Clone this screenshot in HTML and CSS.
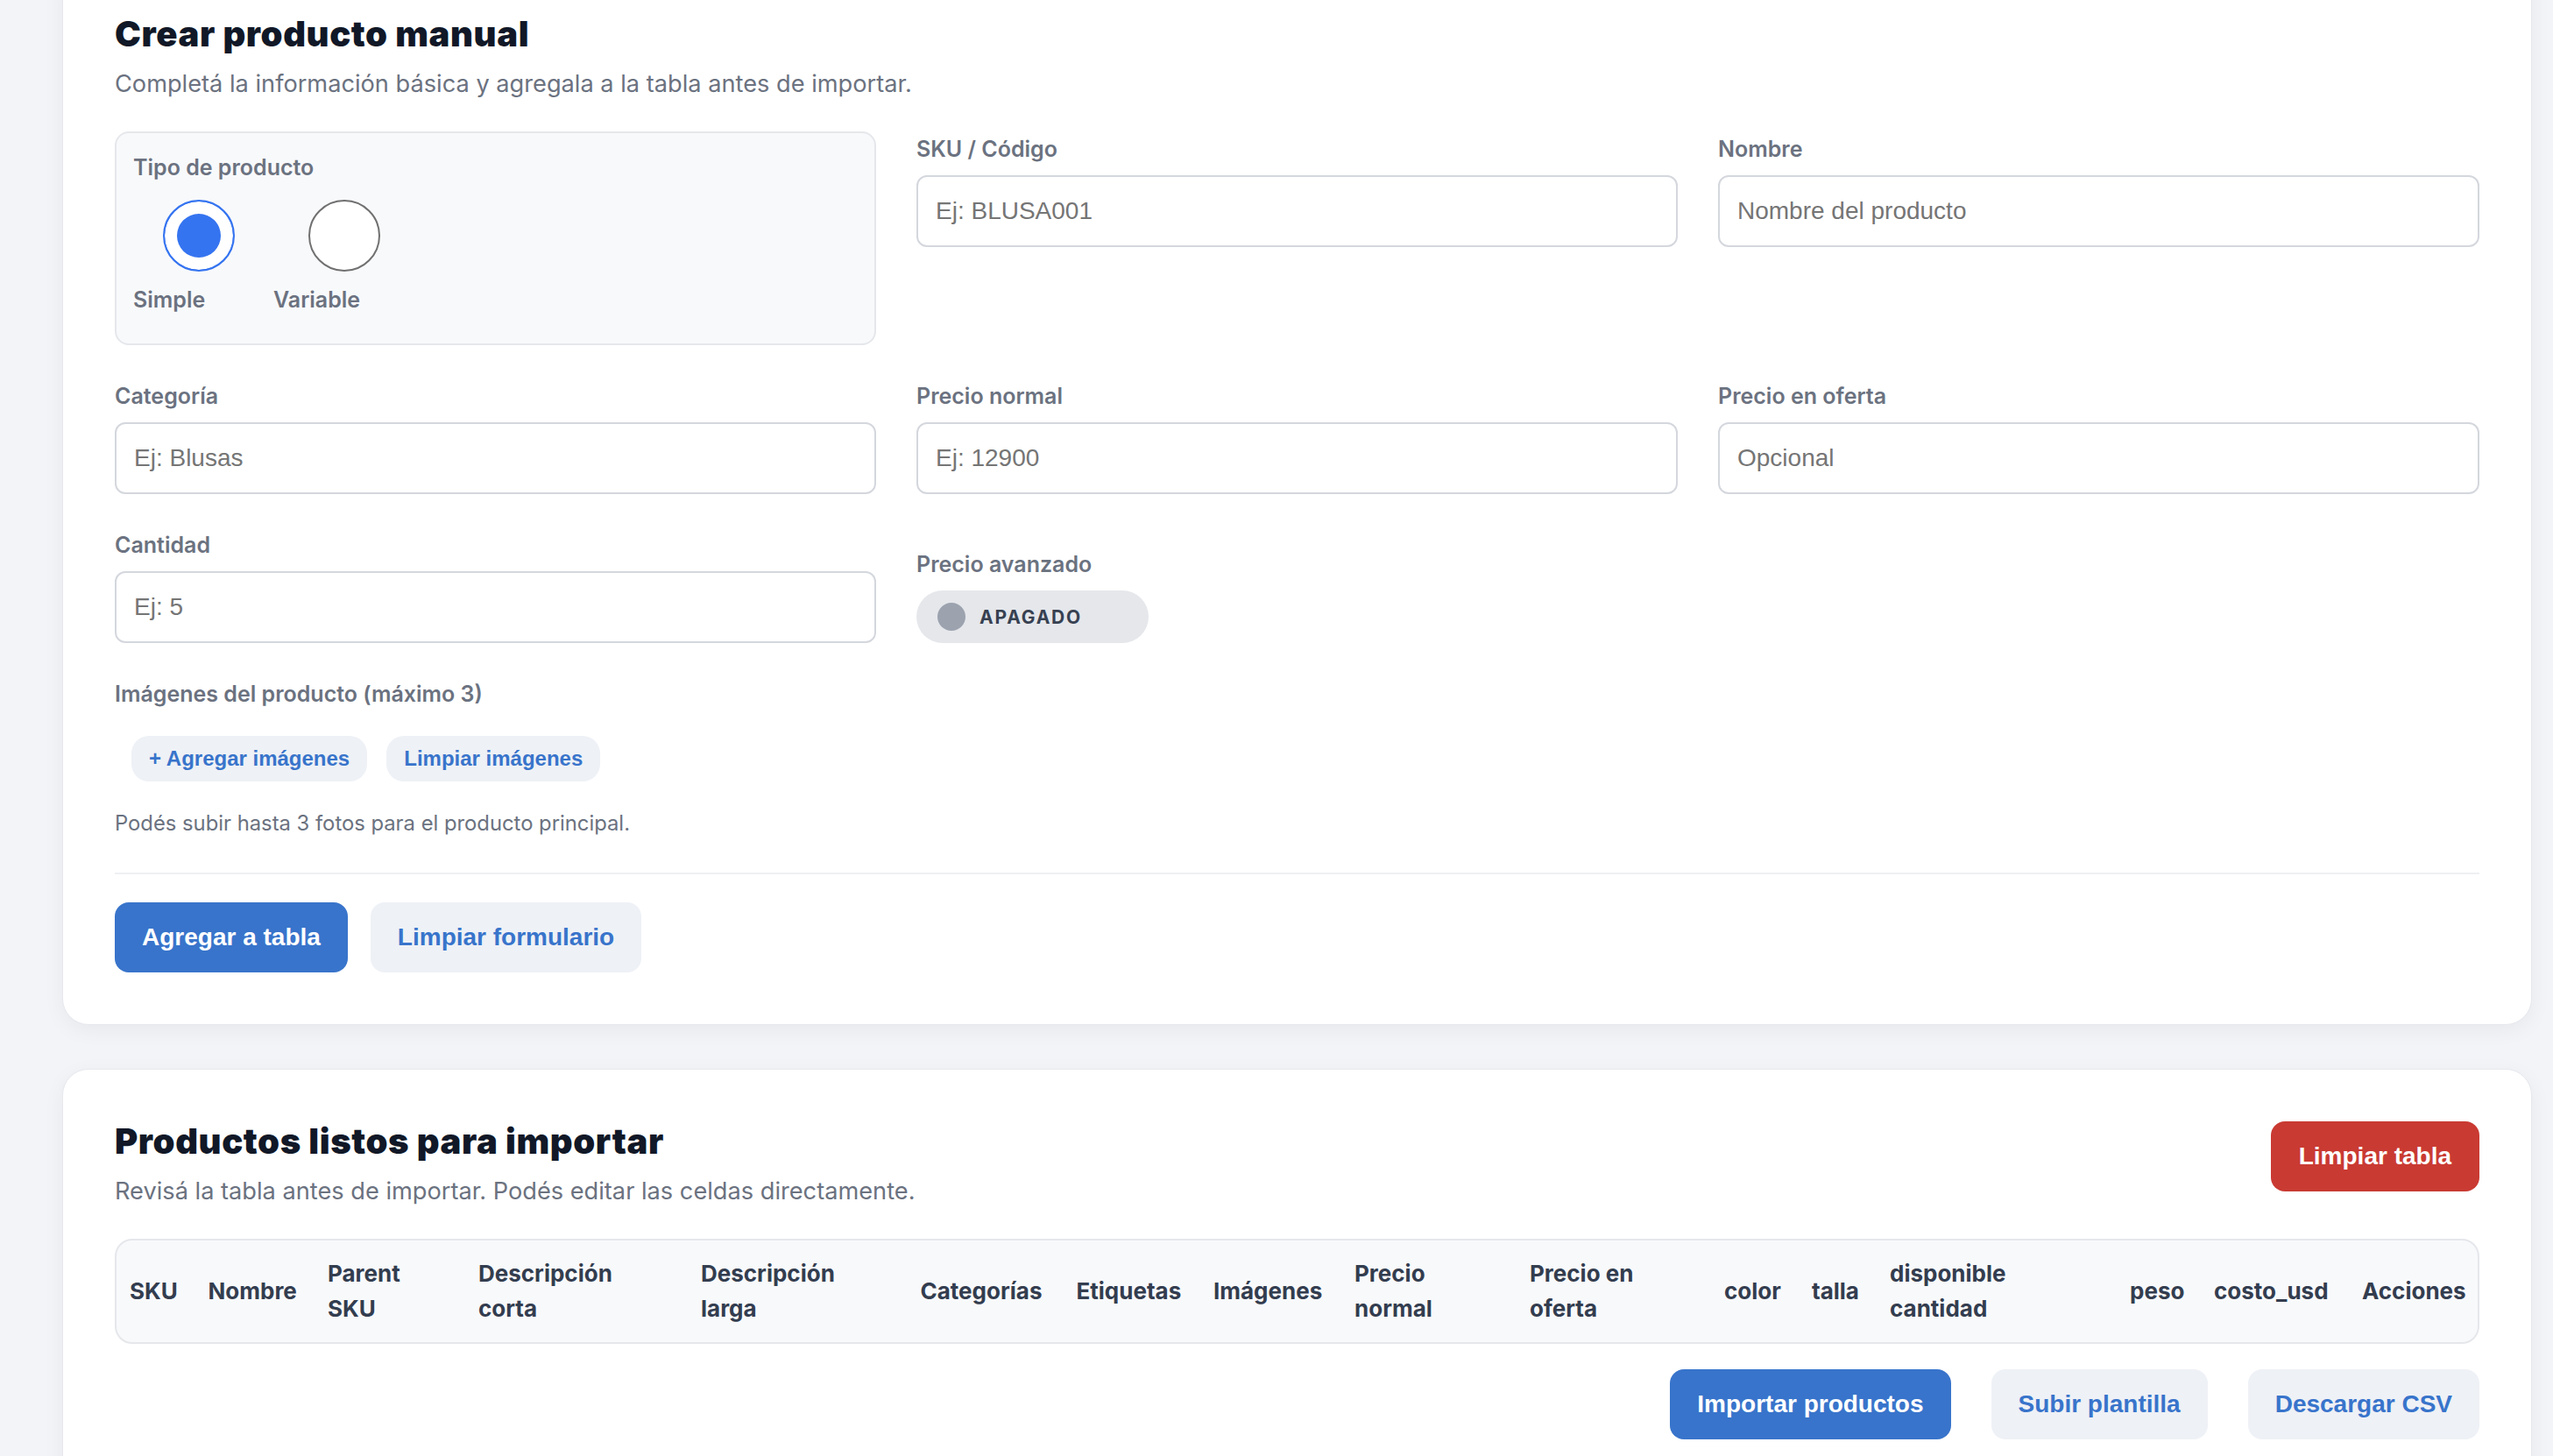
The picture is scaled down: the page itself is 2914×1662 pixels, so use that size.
FILE: index.html
```html
<!DOCTYPE html>
<html lang="es">
<head>
  <meta charset="UTF-8" />
  <meta name="viewport" content="width=device-width, initial-scale=1.0"/>
  <title>Importar productos</title>
  <link rel="stylesheet" href="styles.css">
</head>
<body>
  <main class="page">

    <!-- Crear producto manual -->
    <section class="card">
      <h2 class="card-title">Crear producto manual</h2>
      <p class="card-subtitle">Completá la información básica y agregala a la tabla antes de importar.</p>

      <form class="form-grid" id="manual-form">
        <div class="type-box">
          <span class="field-label">Tipo de producto</span>
          <div class="type-options">
            <label class="type-option type-option--simple">
              <input type="radio" name="tipo" value="simple" checked>
              <span>Simple</span>
            </label>
            <label class="type-option type-option--variable">
              <input type="radio" name="tipo" value="variable">
              <span>Variable</span>
            </label>
          </div>
        </div>

        <div class="field field--top">
          <label class="field-label" for="sku">SKU / Código</label>
          <input class="text-input" id="sku" type="text" placeholder="Ej: BLUSA001">
        </div>

        <div class="field field--top">
          <label class="field-label" for="nombre">Nombre</label>
          <input class="text-input" id="nombre" type="text" placeholder="Nombre del producto">
        </div>

        <div class="field">
          <label class="field-label" for="categoria">Categoría</label>
          <input class="text-input" id="categoria" type="text" placeholder="Ej: Blusas">
        </div>

        <div class="field">
          <label class="field-label" for="precio">Precio normal</label>
          <input class="text-input" id="precio" type="text" placeholder="Ej: 12900">
        </div>

        <div class="field">
          <label class="field-label" for="oferta">Precio en oferta</label>
          <input class="text-input" id="oferta" type="text" placeholder="Opcional">
        </div>

        <div class="field">
          <label class="field-label" for="cantidad">Cantidad</label>
          <input class="text-input" id="cantidad" type="text" placeholder="Ej: 5">
        </div>

        <div class="field field--toggle">
          <span class="field-label">Precio avanzado</span>
          <button type="button" class="toggle">
            <span class="toggle-dot"></span>
            <span class="toggle-text">APAGADO</span>
          </button>
        </div>

        <div class="field field--wide">
          <span class="field-label">Imágenes del producto (máximo 3)</span>
          <div class="image-drop">
            <button type="button" class="btn-chip">+ Agregar imágenes</button>
            <button type="button" class="btn-chip">Limpiar imágenes</button>
          </div>
          <p class="help-text">Podés subir hasta 3 fotos para el producto principal.</p>
        </div>
      </form>

      <div class="divider"></div>

      <div class="actions">
        <button type="button" class="btn btn-primary">Agregar a tabla</button>
        <button type="button" class="btn btn-soft">Limpiar formulario</button>
      </div>
    </section>

    <!-- Tabla de productos -->
    <section class="card">
      <div class="card-head">
        <div>
          <h2 class="card-title">Productos listos para importar</h2>
          <p class="card-subtitle">Revisá la tabla antes de importar. Podés editar las celdas directamente.</p>
        </div>
        <button type="button" class="btn btn-danger">Limpiar tabla</button>
      </div>

      <div class="table-wrap">
        <table class="products">
          <colgroup>
            <col class="c-sku"><col class="c-nombre"><col class="c-parent"><col class="c-corta">
            <col class="c-larga"><col class="c-cat"><col class="c-etiq"><col class="c-img">
            <col class="c-precio"><col class="c-oferta"><col class="c-color"><col class="c-talla">
            <col class="c-disp"><col class="c-peso"><col class="c-costo"><col>
          </colgroup>
          <thead>
            <tr>
              <th>SKU</th>
              <th>Nombre</th>
              <th>Parent<br>SKU</th>
              <th>Descripción<br>corta</th>
              <th>Descripción<br>larga</th>
              <th>Categorías</th>
              <th>Etiquetas</th>
              <th>Imágenes</th>
              <th>Precio<br>normal</th>
              <th>Precio en<br>oferta</th>
              <th>color</th>
              <th>talla</th>
              <th>disponible<br>cantidad</th>
              <th>peso</th>
              <th>costo_usd</th>
              <th>Acciones</th>
            </tr>
          </thead>
          <tbody></tbody>
        </table>
      </div>

      <div class="actions actions--end">
        <button type="button" class="btn btn-primary">Importar productos</button>
        <button type="button" class="btn btn-soft">Subir plantilla</button>
        <button type="button" class="btn btn-soft">Descargar CSV</button>
      </div>
    </section>

  </main>
</body>
</html>
```

FILE: styles.css
```css
body {
  margin: 0;
  background: #f3f4f7;
  font-family: "Inter", "Noto Sans", sans-serif;
  color: #111827;
}

/* page is shown scrolled a little, so the first card starts above the top */
.page {
  margin-top: -44px;
  padding: 0 24px 40px 71px;
  display: flex;
  flex-direction: column;
  gap: 50px;
}

.card {
  background: #fff;
  border: 1px solid #e6e8ee;
  border-radius: 30px;
  padding: 59px;
  box-shadow: 0 6px 24px rgba(17, 24, 39, 0.05);
}

.card-title {
  margin: 0;
  font-size: 40px;
  line-height: 46px;
  font-weight: 900;
  color: #111827;
  letter-spacing: 0.6px;
}

.card-subtitle {
  margin: 16px 0 37px;
  font-size: 27.2px;
  line-height: 35px;
  color: #6b7280;
}

.card-head {
  display: flex;
  justify-content: space-between;
  align-items: flex-start;
}

/* form */
.form-grid {
  display: grid;
  grid-template-columns: repeat(3, 1fr);
  column-gap: 46px;
  row-gap: 41px;
  align-items: start;
}

.field {
  display: flex;
  flex-direction: column;
}

.field--top {
  padding-top: 3px;
}

.field--toggle {
  align-self: end;
  align-items: flex-start;
}

.field--wide {
  grid-column: 1 / -1;
}

.field-label {
  display: block;
  font-size: 25px;
  line-height: 34px;
  font-weight: 600;
  color: #6b7280;
  margin-bottom: 13px;
}

.text-input {
  box-sizing: border-box;
  height: 82px;
  padding: 0 20px;
  border: 2px solid #d4d7dd;
  border-radius: 12px;
  background: #fff;
  font-family: "Liberation Sans", Arial, sans-serif;
  font-size: 28px;
  color: #111827;
}

.text-input::placeholder {
  color: #757575;
}

.type-box {
  background: #f8f9fb;
  border: 2px solid #e5e7eb;
  border-radius: 16px;
  padding: 22px 19px 33px;
}

.type-box .field-label {
  margin-bottom: 20px;
}

.type-options {
  display: flex;
}

.type-option {
  display: flex;
  flex-direction: column;
  align-items: flex-start;
  gap: 15px;
  width: 160px;
  font-size: 25px;
  line-height: 34px;
  font-weight: 600;
  color: #6b7280;
  cursor: pointer;
}

.type-option input {
  appearance: none;
  margin: 0;
  width: 82px;
  height: 82px;
  border-radius: 50%;
  border: 2px solid #707070;
  background: #fff;
}

.type-option--simple input {
  margin-left: 34px;
}

.type-option--variable input {
  margin-left: 40px;
}

.type-option input:checked {
  border-color: #3574f0;
  background: #3574f0;
  box-shadow: inset 0 0 0 14px #fff;
}

.toggle {
  box-sizing: border-box;
  display: flex;
  align-items: center;
  gap: 16px;
  width: 265px;
  height: 60px;
  padding: 0 24px;
  border: none;
  border-radius: 30px;
  background: #e5e7eb;
  cursor: pointer;
}

.toggle-dot {
  width: 32px;
  height: 32px;
  border-radius: 50%;
  background: #9ca3af;
}

.toggle-text {
  font-family: "Inter", sans-serif;
  font-size: 21px;
  font-weight: 700;
  letter-spacing: 1.8px;
  color: #374151;
}

.image-drop {
  display: flex;
  gap: 22px;
  padding: 18px 19px;
}

.btn-chip {
  padding: 12px 20px;
  border: none;
  border-radius: 20px;
  background: #eef1f6;
  color: #3874cb;
  font-family: "Liberation Sans", Arial, sans-serif;
  font-size: 24px;
  line-height: 28px;
  font-weight: 700;
  cursor: pointer;
}

.help-text {
  margin: 14px 0 0;
  font-size: 23.8px;
  line-height: 32px;
  color: #6b7280;
}

.divider {
  height: 2px;
  background: #eef0f3;
  margin: 40px 0 32px;
}

/* buttons */
.actions {
  display: flex;
  gap: 26px;
}

.actions--end {
  justify-content: flex-end;
  gap: 46px;
  margin-top: 29px;
}

.btn {
  height: 80px;
  padding: 0 31px;
  border: none;
  border-radius: 16px;
  font-family: "Liberation Sans", Arial, sans-serif;
  font-size: 28px;
  font-weight: 700;
  cursor: pointer;
}

.btn-primary {
  background: #3874cb;
  color: #fff;
}

.btn-soft {
  background: #eef1f6;
  color: #3874cb;
}

.btn-danger {
  background: #c93a32;
  color: #fff;
  padding: 0 32px;
}

/* table */
.table-wrap {
  border: 2px solid #e5e7eb;
  border-radius: 20px;
  background: #f8f9fb;
  overflow: hidden;
}

.products {
  width: 100%;
  table-layout: fixed;
  border-collapse: collapse;
}

.products th {
  padding: 18px 15px;
  text-align: left;
  vertical-align: middle;
  font-size: 26px;
  line-height: 40px;
  font-weight: 700;
  color: #333d4f;
  white-space: nowrap;
}

.c-sku { width: 89.5px; }
.c-nombre { width: 136.5px; }
.c-parent { width: 172px; }
.c-corta { width: 254px; }
.c-larga { width: 250.5px; }
.c-cat { width: 178px; }
.c-etiq { width: 156.5px; }
.c-img { width: 161px; }
.c-precio { width: 200px; }
.c-oferta { width: 222px; }
.c-color { width: 100px; }
.c-talla { width: 89px; }
.c-disp { width: 274px; }
.c-peso { width: 96px; }
.c-costo { width: 169px; }
```
